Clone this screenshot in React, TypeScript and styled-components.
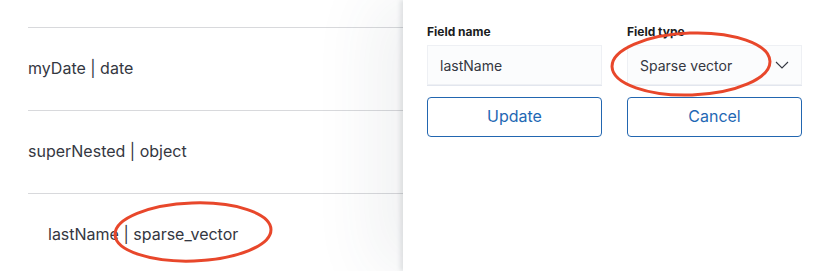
import React from "react";
import styled, { createGlobalStyle } from "styled-components";

const Global = createGlobalStyle`
  html, body { margin: 0; padding: 0; background: #fff; }
  body { font-family: Inter, "Noto Sans", sans-serif; color: #343741; -webkit-font-smoothing: antialiased; }
  * { box-sizing: border-box; }
`;

const Page = styled.div`
  position: relative;
  width: 820px;
  height: 271px;
  display: flex;
  overflow: hidden;
`;

const List = styled.div`
  width: 403px;
  flex: none;
  padding: 27px 0 0 28px;
  display: flex;
  flex-direction: column;
`;

const Row = styled.div<{ $indent?: number }>`
  height: 83px;
  flex: none;
  border-top: 1px solid #d8d9dc;
  display: flex;
  align-items: center;
  padding-left: ${(p) => p.$indent ?? 0}px;
  padding-bottom: 2px;
  font-size: 16px;
  color: #343741;
  white-space: nowrap;
`;

const Flyout = styled.div`
  flex: 1;
  background: #fff;
  position: relative;
  z-index: 1;
  padding: 24px 18px 0 24px;
  box-shadow: -3px 0 4px rgba(60, 66, 80, 0.12), -30px 0 60px rgba(60, 66, 80, 0.07);
`;

const FormGrid = styled.div`
  display: grid;
  grid-template-columns: 175px 175px;
  column-gap: 25px;
  row-gap: 12px;
`;

const Field = styled.div`
  display: flex;
  flex-direction: column;
  gap: 5px;
`;

const Label = styled.label`
  font-size: 12px;
  font-weight: 700;
  color: #1a1c21;
  line-height: 16px;
`;

const Control = styled.div`
  height: 40px;
  background: #fbfcfd;
  border: 1px solid #eef0f4;
  box-shadow: 0 1px 0 #e2e6ee;
  display: flex;
  align-items: center;
  justify-content: space-between;
  padding: 0 12px;
  font-size: 14px;
  color: #343741;
`;

const Button = styled.button`
  height: 40px;
  border: 1px solid #2266b0;
  border-radius: 4px;
  background: #fff;
  color: #1f68b4;
  font-family: Inter, "Noto Sans", sans-serif;
  font-size: 16px;
  padding: 0 0 2px;
  cursor: pointer;
`;

const Marks = styled.svg`
  position: absolute;
  left: 0;
  top: 0;
  z-index: 2;
  pointer-events: none;
`;

const Chevron = () => (
  <svg width="14" height="8" viewBox="0 0 14 8" fill="none">
    <path d="M1 1l6 6 6-6" stroke="#343741" strokeWidth="1.1" />
  </svg>
);

export default function App() {
  return (
    <>
      <Global />
      <Page>
        <List>
          <Row>myDate | date</Row>
          <Row>superNested | object</Row>
          <Row $indent={20}>lastName | sparse_vector</Row>
        </List>
        <Flyout>
          <FormGrid>
            <Field>
              <Label>Field name</Label>
              <Control>lastName</Control>
            </Field>
            <Field>
              <Label>Field type</Label>
              <Control>
                <span>Sparse vector</span>
                <Chevron />
              </Control>
            </Field>
            <Button>Update</Button>
            <Button>Cancel</Button>
          </FormGrid>
        </Flyout>
        <Marks width="820" height="271" viewBox="0 0 820 271">
          <ellipse cx="193" cy="232" rx="78" ry="29" fill="none" stroke="#e8472b" strokeWidth="3" transform="rotate(-2 193 232)" />
          <ellipse cx="691" cy="64" rx="79" ry="31" fill="none" stroke="#e8472b" strokeWidth="3" transform="rotate(-2 691 64)" />
        </Marks>
      </Page>
    </>
  );
}
